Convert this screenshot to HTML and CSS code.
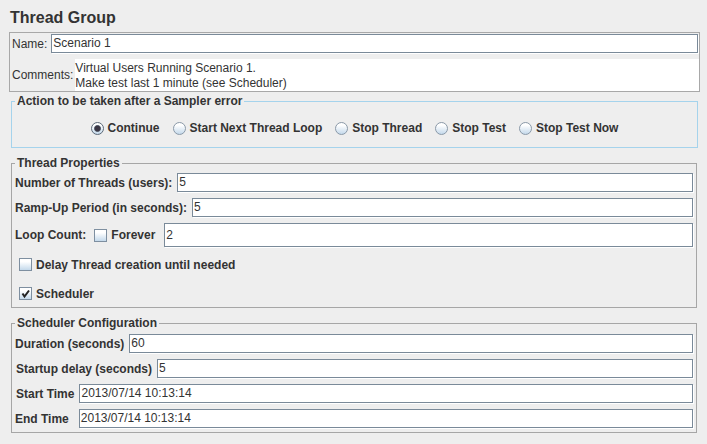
FILE: index.html
```html
<!DOCTYPE html>
<html>
<head>
<meta charset="utf-8">
<title>Thread Group</title>
<link rel="stylesheet" href="styles.css">
</head>
<body>
<h1 class="title">Thread Group</h1>

<div class="name-panel">
  <div class="name-row">
    <span class="plain-label">Name:</span>
    <div class="field">Scenario 1</div>
  </div>
  <div class="comments-row">
    <span class="plain-label comments-label">Comments:</span>
    <div class="textarea">
      <div>Virtual Users Running Scenario 1.</div>
      <div>Make test last 1 minute (see Scheduler)</div>
    </div>
  </div>
</div>

<fieldset class="group group-action">
  <legend>Action to be taken after a Sampler error</legend>
  <div class="radio-row">
    <span class="radio-item"><span class="radio radio-on"></span>Continue</span>
    <span class="radio-item"><span class="radio"></span>Start Next Thread Loop</span>
    <span class="radio-item"><span class="radio"></span>Stop Thread</span>
    <span class="radio-item"><span class="radio"></span>Stop Test</span>
    <span class="radio-item"><span class="radio"></span>Stop Test Now</span>
  </div>
</fieldset>

<fieldset class="group group-thread">
  <legend>Thread Properties</legend>
  <div class="form-row">
    <span class="label">Number of Threads (users):</span>
    <div class="field">5</div>
  </div>
  <div class="form-row">
    <span class="label">Ramp-Up Period (in seconds):</span>
    <div class="field">5</div>
  </div>
  <div class="form-row loop-row">
    <span class="label">Loop Count:</span>
    <span class="check-item loop-check"><span class="check"></span>Forever</span>
    <div class="field field-tall">2</div>
  </div>
  <div class="check-row">
    <span class="check-item"><span class="check"></span>Delay Thread creation until needed</span>
  </div>
  <div class="check-row check-row-last">
    <span class="check-item"><span class="check check-on"><svg width="11" height="11" viewBox="0 0 11 11"><polyline points="2.5,5.5 4.5,8.5 9,2.5" fill="none" stroke="#222" stroke-width="2"/></svg></span>Scheduler</span>
  </div>
</fieldset>

<fieldset class="group group-sched">
  <legend>Scheduler Configuration</legend>
  <div class="form-row">
    <span class="label">Duration (seconds)</span>
    <div class="field">60</div>
  </div>
  <div class="form-row">
    <span class="label label-indent">Startup delay (seconds)</span>
    <div class="field">5</div>
  </div>
  <div class="form-row">
    <span class="label label-indent">Start Time</span>
    <div class="field">2013/07/14 10:13:14</div>
  </div>
  <div class="form-row">
    <span class="label label-end">End Time</span>
    <div class="field">2013/07/14 10:13:14</div>
  </div>
</fieldset>
</body>
</html>
```

FILE: styles.css
```css
* {
  box-sizing: border-box;
}

html,
body {
  margin: 0;
  padding: 0;
  background: #eeeeee;
}

body {
  width: 707px;
  height: 444px;
  overflow: hidden;
  font-family: "Liberation Sans", Arial, sans-serif;
  font-size: 12px;
  color: #333333;
}

.title {
  margin: 0;
  padding: 8px 0 0 10px;
  font-size: 16px;
  line-height: 20px;
  font-weight: bold;
}

/* Name / comments panel */
.name-panel {
  margin: 4px 7px 0 9px;
  height: 60px;
  border: 1px solid #a8a8a8;
}

.name-row {
  display: flex;
  align-items: center;
  gap: 4px;
  padding: 1px 1px 0 2px;
}

.plain-label {
  font-weight: normal;
  white-space: nowrap;
}

.comments-label {
  padding-right: 2px;
}

.comments-row {
  display: flex;
  align-items: center;
  padding: 6px 0 0 2px;
}

.textarea {
  flex: 1;
  height: 32px;
  padding-top: 2px;
  background: #ffffff;
  line-height: 15px;
  white-space: nowrap;
}

/* Text fields */
.field {
  flex: 1;
  min-width: 0;
  height: 19px;
  padding: 0 1px;
  border: 1px solid #7a8a99;
  background: #ffffff;
  box-shadow: 1px 1px 0 #ffffff;
  line-height: 17px;
  white-space: nowrap;
  font-weight: normal;
}

.field-tall {
  height: 24px;
  line-height: 22px;
}

/* Titled groups */
.group {
  min-width: 0;
  margin: 8px 10px 0 11px;
  padding: 0 3px;
  border: 1px solid #a6a6a6;
}

.group legend {
  margin: 0;
  padding: 0 2px;
  line-height: 15px;
  font-weight: bold;
}

.group-action {
  margin: 2px 9px 0 11px;
  padding: 9px 3px;
  border-color: #a5d3ec;
}

.group-thread {
  padding: 2px 3px 3px;
}

.group-sched {
  padding: 3px 3px 4px;
}

/* Radios */
.radio-row {
  display: flex;
  justify-content: center;
  align-items: center;
  gap: 13px;
  height: 20px;
}

.radio-item {
  display: flex;
  align-items: center;
  gap: 4px;
  font-weight: bold;
  white-space: nowrap;
}

.radio {
  display: block;
  width: 13px;
  height: 13px;
  border-radius: 50%;
  border: 1px solid #8a99a8;
  background: linear-gradient(#ffffff 20%, #c4d9eb);
}

.radio-on {
  border-color: #5d6a78;
  background:
    radial-gradient(circle, #3a3644 0 2.6px, #6e7886 3.2px, transparent 3.8px),
    linear-gradient(#ffffff 20%, #c4d9eb);
}

/* Form rows */
.form-row {
  display: flex;
  align-items: center;
  gap: 5px;
}

.form-row + .form-row {
  margin-top: 6px;
}

.label {
  font-weight: bold;
  white-space: nowrap;
}

.label-indent {
  padding-left: 1px;
}

.label-end {
  margin-right: 5px;
}

/* Checkboxes */
.check-item {
  display: flex;
  align-items: center;
  gap: 4px;
  font-weight: bold;
  white-space: nowrap;
}

.loop-check {
  margin: 0 4px 0 3px;
}

.check {
  display: flex;
  align-items: center;
  justify-content: center;
  width: 13px;
  height: 13px;
  border: 1px solid #7e8fa0;
  background: linear-gradient(#ffffff 25%, #c4d9eb);
}

.check-row {
  display: flex;
  align-items: center;
  height: 21px;
  margin-top: 7px;
  padding-left: 4px;
}

.check-row-last {
  margin-top: 8px;
}
```
